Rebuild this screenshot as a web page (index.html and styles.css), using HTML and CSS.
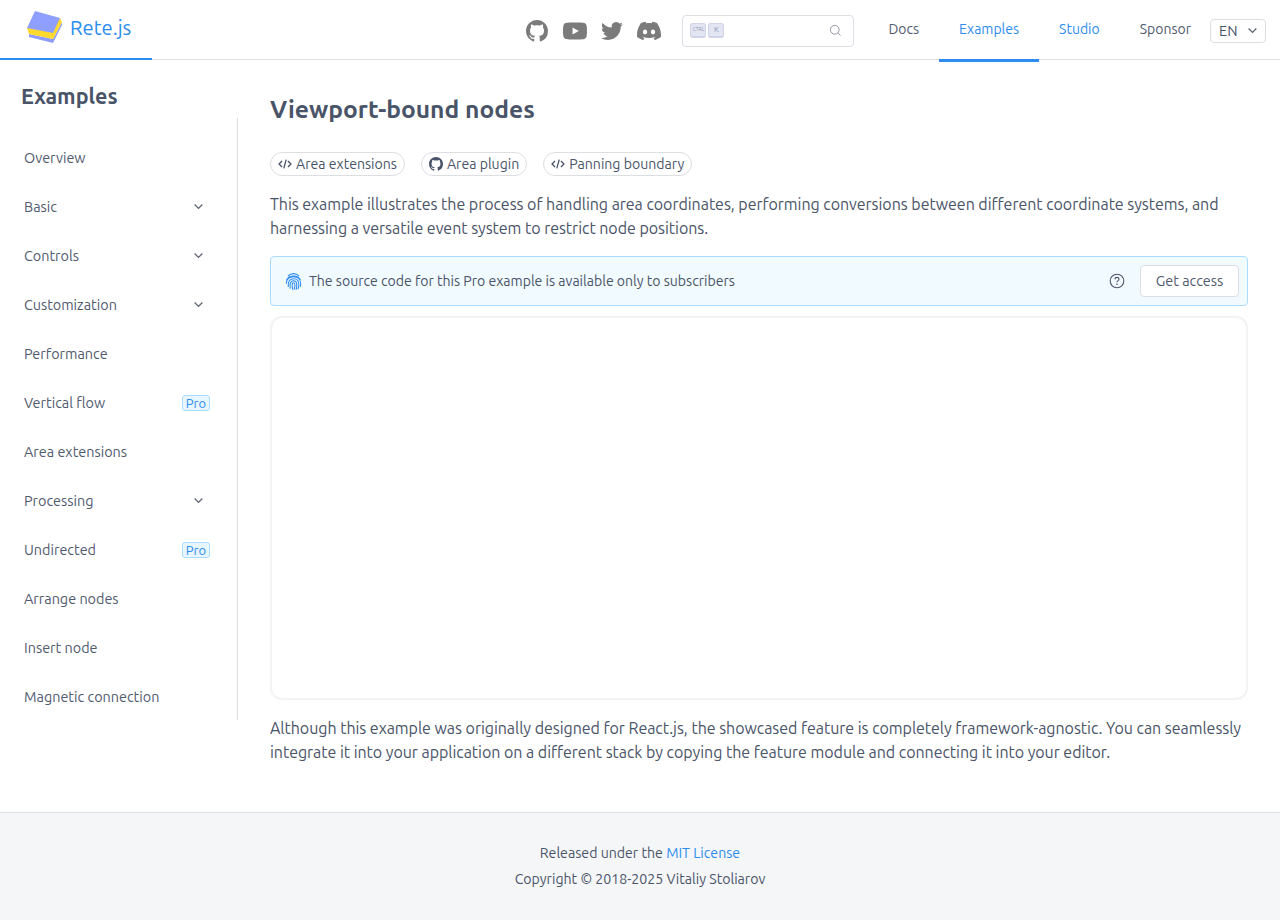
FILE: index.html
```html
<!DOCTYPE html>
<html lang="en">
<head>
    <meta charset="UTF-8">
    <meta name="viewport" content="width=device-width, initial-scale=1.0">
    <title>Viewport-bound nodes | Rete.js</title>
    <link rel="stylesheet" href="styles.css">
</head>
<body>
    <header class="topbar">
        <a class="brand">
            <svg class="brand-logo" viewBox="0 0 36 33">
                <polygon points="2,23 2,26 26,32 35,14 35,11 26,28" fill="#8f9cff"/>
                <polygon points="0,17 2,23 26,28 35,11 33,7" fill="#ffd92c"/>
                <polygon points="8,0 33,7 26,22 0,17" fill="#8f9fff"/>
            </svg>
            <span>Rete.js</span>
        </a>
        <div class="topbar-right">
            <div class="socials">
                <svg class="social social-small social-github" viewBox="0 0 16 16"><path d="M8 0C3.58 0 0 3.58 0 8c0 3.54 2.29 6.53 5.47 7.59.4.07.55-.17.55-.38 0-.19-.01-.82-.01-1.49-2.01.37-2.53-.49-2.69-.94-.09-.23-.48-.94-.82-1.13-.28-.15-.68-.52-.01-.53.63-.01 1.08.58 1.23.82.72 1.21 1.87.87 2.33.66.07-.52.28-.87.51-1.07-1.78-.2-3.64-.89-3.64-3.95 0-.87.31-1.59.82-2.15-.08-.2-.36-1.02.08-2.12 0 0 .67-.21 2.2.82.64-.18 1.32-.27 2-.27.68 0 1.36.09 2 .27 1.53-1.04 2.2-.82 2.2-.82.44 1.1.16 1.92.08 2.12.51.56.82 1.27.82 2.15 0 3.07-1.87 3.75-3.65 3.95.29.25.54.73.54 1.48 0 1.07-.01 1.93-.01 2.2 0 .21.15.46.55.38A8.013 8.013 0 0016 8c0-4.42-3.58-8-8-8z"/></svg>
                <svg class="social" viewBox="0 0 24 24"><path d="M23.498 6.186a3.016 3.016 0 0 0-2.122-2.136C19.505 3.545 12 3.545 12 3.545s-7.505 0-9.377.505A3.017 3.017 0 0 0 .502 6.186C0 8.07 0 12 0 12s0 3.93.502 5.814a3.016 3.016 0 0 0 2.122 2.136c1.871.505 9.376.505 9.376.505s7.505 0 9.377-.505a3.015 3.015 0 0 0 2.122-2.136C24 15.93 24 12 24 12s0-3.93-.502-5.814zM9.545 15.568V8.432L15.818 12l-6.273 3.568z"/></svg>
                <svg class="social social-small" viewBox="0 0 24 24"><path d="M23.953 4.57a10 10 0 01-2.825.775 4.958 4.958 0 002.163-2.723c-.951.555-2.005.959-3.127 1.184a4.92 4.92 0 00-8.384 4.482C7.69 8.095 4.067 6.13 1.64 3.162a4.822 4.822 0 00-.666 2.475c0 1.71.87 3.213 2.188 4.096a4.904 4.904 0 01-2.228-.616v.06a4.923 4.923 0 003.946 4.827 4.996 4.996 0 01-2.212.085 4.936 4.936 0 004.604 3.417 9.867 9.867 0 01-6.102 2.105c-.39 0-.779-.023-1.17-.067a13.995 13.995 0 007.557 2.209c9.053 0 13.998-7.496 13.998-13.985 0-.21 0-.42-.015-.63A9.935 9.935 0 0024 4.59z"/></svg>
                <svg class="social" viewBox="0 0 24 24"><path d="M20.317 4.3698a19.7913 19.7913 0 00-4.8851-1.5152.0741.0741 0 00-.0785.0371c-.211.3753-.4447.8648-.6083 1.2495-1.8447-.2762-3.68-.2762-5.4868 0-.1636-.3933-.4058-.8742-.6177-1.2495a.077.077 0 00-.0785-.037 19.7363 19.7363 0 00-4.8852 1.515.0699.0699 0 00-.0321.0277C.5334 9.0458-.319 13.5799.0992 18.0578a.0824.0824 0 00.0312.0561c2.0528 1.5076 4.0413 2.4228 5.9929 3.0294a.0777.0777 0 00.0842-.0276c.4616-.6304.8731-1.2952 1.226-1.9942a.076.076 0 00-.0416-.1057c-.6528-.2476-1.2743-.5495-1.8722-.8923a.077.077 0 01-.0076-.1277c.1258-.0943.2517-.1923.3718-.2914a.0743.0743 0 01.0776-.0105c3.9278 1.7933 8.18 1.7933 12.0614 0a.0739.0739 0 01.0785.0095c.1202.099.246.1981.3728.2924a.077.077 0 01-.0066.1276 12.2986 12.2986 0 01-1.873.8914.0766.0766 0 00-.0407.1067c.3604.698.7719 1.3628 1.225 1.9932a.076.076 0 00.0842.0286c1.961-.6067 3.9495-1.5219 6.0023-3.0294a.077.077 0 00.0313-.0552c.5004-5.177-.8382-9.6739-3.5485-13.6604a.061.061 0 00-.0312-.0286zM8.02 15.3312c-1.1825 0-2.1569-1.0857-2.1569-2.419 0-1.3332.9555-2.4189 2.157-2.4189 1.2108 0 2.1757 1.0952 2.1568 2.419 0 1.3332-.9555 2.4189-2.1569 2.4189zm7.9748 0c-1.1825 0-2.1569-1.0857-2.1569-2.419 0-1.3332.9554-2.4189 2.1569-2.4189 1.2108 0 2.1757 1.0952 2.1568 2.419 0 1.3332-.946 2.4189-2.1568 2.4189Z"/></svg>
            </div>
            <div class="search">
                <span class="key key-small">CTRL</span>
                <span class="key">K</span>
                <svg class="search-icon" viewBox="0 0 14 14"><circle cx="6.2" cy="6.2" r="4.7"/><path d="M9.6 9.6 12.4 12.4"/></svg>
            </div>
            <nav class="nav">
                <a class="nav-item">Docs</a>
                <a class="nav-item nav-active">Examples</a>
                <a class="nav-item nav-blue">Studio</a>
                <a class="nav-item">Sponsor</a>
            </nav>
            <div class="lang">EN <svg class="chevron" viewBox="0 0 10 10"><path d="M1.5 3.2 5 6.7 8.5 3.2"/></svg></div>
        </div>
    </header>

    <div class="layout">
        <aside class="sidebar">
            <h2 class="sidebar-title">Examples</h2>
            <ul class="menu">
                <li class="menu-item">Overview</li>
                <li class="menu-item">Basic <svg class="chevron" viewBox="0 0 10 10"><path d="M1.5 3.2 5 6.7 8.5 3.2"/></svg></li>
                <li class="menu-item">Controls <svg class="chevron" viewBox="0 0 10 10"><path d="M1.5 3.2 5 6.7 8.5 3.2"/></svg></li>
                <li class="menu-item">Customization <svg class="chevron" viewBox="0 0 10 10"><path d="M1.5 3.2 5 6.7 8.5 3.2"/></svg></li>
                <li class="menu-item">Performance</li>
                <li class="menu-item">Vertical flow <span class="pro">Pro</span></li>
                <li class="menu-item">Area extensions</li>
                <li class="menu-item">Processing <svg class="chevron" viewBox="0 0 10 10"><path d="M1.5 3.2 5 6.7 8.5 3.2"/></svg></li>
                <li class="menu-item">Undirected <span class="pro">Pro</span></li>
                <li class="menu-item">Arrange nodes</li>
                <li class="menu-item">Insert node</li>
                <li class="menu-item">Magnetic connection</li>
            </ul>
        </aside>

        <main class="content">
            <h1 class="page-title">Viewport-bound nodes</h1>
            <div class="chips">
                <a class="chip"><svg class="chip-icon" viewBox="0 0 16 16"><path class="code" d="M4.6 4.5 1.2 8l3.4 3.5M11.4 4.5 14.8 8l-3.4 3.5M9.4 3 6.6 13"/></svg>Area extensions</a>
                <a class="chip"><svg class="chip-icon" viewBox="0 0 16 16"><path d="M8 0C3.58 0 0 3.58 0 8c0 3.54 2.29 6.53 5.47 7.59.4.07.55-.17.55-.38 0-.19-.01-.82-.01-1.49-2.01.37-2.53-.49-2.69-.94-.09-.23-.48-.94-.82-1.13-.28-.15-.68-.52-.01-.53.63-.01 1.08.58 1.23.82.72 1.21 1.87.87 2.33.66.07-.52.28-.87.51-1.07-1.78-.2-3.64-.89-3.64-3.95 0-.87.31-1.59.82-2.15-.08-.2-.36-1.02.08-2.12 0 0 .67-.21 2.2.82.64-.18 1.32-.27 2-.27.68 0 1.36.09 2 .27 1.53-1.04 2.2-.82 2.2-.82.44 1.1.16 1.92.08 2.12.51.56.82 1.27.82 2.15 0 3.07-1.87 3.75-3.65 3.95.29.25.54.73.54 1.48 0 1.07-.01 1.93-.01 2.2 0 .21.15.46.55.38A8.013 8.013 0 0016 8c0-4.42-3.58-8-8-8z"/></svg>Area plugin</a>
                <a class="chip"><svg class="chip-icon" viewBox="0 0 16 16"><path class="code" d="M4.6 4.5 1.2 8l3.4 3.5M11.4 4.5 14.8 8l-3.4 3.5M9.4 3 6.6 13"/></svg>Panning boundary</a>
            </div>
            <p class="text">This example illustrates the process of handling area coordinates, performing conversions between different coordinate systems, and harnessing a versatile event system to restrict node positions.</p>
            <div class="alert">
                <svg class="fingerprint" viewBox="0 0 18 20">
                    <path d="M3 4.2C6.5 .8 11.5 .8 15 4.2M1.6 8.4C4.5 2.8 13.5 2.8 16.4 8.4M1.4 12.4C1.6 6.5 5.5 4.9 9 4.9s7.4 1.8 7.6 7.2c0 1.6 0 2.6-.5 3.6M3.4 15.8C2.9 10 5 7 9 7s5.9 2.5 5.6 6.6c-.1 1.8-.2 3-.9 4.3M5.6 17.6C4.9 13.5 5.2 9.2 9 9.2s3.6 3.6 3.4 6c-.1 1.3-.3 2.4-.8 3.6M8.4 18.8C7.4 16 6.9 11.4 9 11.4s1.4 4.400 .8 7"/>
                </svg>
                <span class="alert-text">The source code for this Pro example is available only to subscribers</span>
                <svg class="help" viewBox="0 0 16 16"><circle cx="8" cy="8" r="6.8"/><path d="M6 6.300C6 5 7 4.400 8 4.400s2 .7 2 1.800C10 7.700 8 7.600 8 9.300"/><circle class="dot" cx="8" cy="11.300" r=".8"/></svg>
                <button class="access">Get access</button>
            </div>
            <div class="canvas"></div>
            <p class="text">Although this example was originally designed for React.js, the showcased feature is completely framework-agnostic. You can seamlessly integrate it into your application on a different stack by copying the feature module and connecting it into your editor.</p>
        </main>
    </div>

    <footer class="footer">
        <p>Released under the <a>MIT License</a></p>
        <p>Copyright © 2018-2025 Vitaliy Stoliarov</p>
    </footer>
</body>
</html>
```

FILE: styles.css
```css
* {
    box-sizing: border-box;
}

body {
    margin: 0;
    font-family: Ubuntu, "Noto Sans", sans-serif;
    font-size: 14px;
    color: #4a5468;
    background: #fff;
}

/* header */
.topbar {
    display: flex;
    justify-content: space-between;
    height: 60px;
    border-bottom: 1px solid #dcdfe4;
}

.brand {
    display: flex;
    align-items: center;
    gap: 7px;
    width: 152px;
    height: 60px;
    padding: 0 0 4px 27px;
    border-bottom: 2px solid #2b8cf0;
    font-size: 20.2px;
    color: #2b8cf0;
}

.brand-logo {
    width: 36px;
    height: 33px;
}

.topbar-right {
    display: flex;
    align-items: flex-start;
}

.socials {
    display: flex;
    align-items: center;
    gap: 14px;
    height: 60px;
    padding-top: 1px;
}

.social {
    width: 24px;
    height: 24px;
    fill: #7b7b7b;
}

.social-small {
    width: 22px;
    height: 22px;
}

.social-github {
    margin-right: 1px;
}

.search {
    display: flex;
    align-items: center;
    gap: 2px;
    width: 172px;
    height: 32px;
    margin: 15px 14px 0 21px;
    padding: 0 11px 2px 7px;
    border: 1px solid #dcdfe6;
    border-radius: 4px;
}

.key {
    width: 16px;
    height: 15px;
    border: 1px solid #cfd3e4;
    border-bottom-width: 2px;
    border-radius: 3px;
    background: #e3e6f2;
    color: #8f98b5;
    font-size: 8px;
    line-height: 11px;
    text-align: center;
}

.key-small {
    font-size: 5px;
}

.search-icon {
    width: 13px;
    height: 13px;
    margin-left: auto;
    fill: none;
    stroke: #8a8f98;
    stroke-width: 1;
}

.nav {
    display: flex;
}

.nav-item {
    height: 62px;
    padding: 0 20px;
    font-size: 14px;
    line-height: 59px;
    color: #515a6e;
}

.nav-item:last-child {
    padding-right: 19px;
}

.nav-active {
    color: #2d8cf0;
    border-bottom: 3px solid #2d8cf0;
}

.nav-blue {
    color: #2d8cf0;
}

.lang {
    display: flex;
    align-items: center;
    justify-content: space-between;
    width: 56px;
    height: 24px;
    margin: 19px 14px 0 0;
    padding: 0 7px 2px 8px;
    border: 1px solid #dcdee2;
    border-radius: 4px;
    font-size: 14.5px;
}

.chevron {
    width: 11px;
    height: 11px;
    fill: none;
    stroke: #5f6673;
    stroke-width: 1.2;
}

/* page */
.layout {
    display: flex;
    height: 752px;
}

.sidebar {
    width: 238px;
    flex-shrink: 0;
}

.sidebar-title {
    margin: 21px 0 0 21px;
    height: 37px;
    font-size: 21.5px;
    line-height: 30px;
    font-weight: 700;
}

.menu {
    margin: 0;
    padding: 15px 0 0;
    height: 602px;
    overflow: hidden;
    list-style: none;
    border-right: 1px solid #dcdee2;
}

.menu-item {
    display: flex;
    align-items: center;
    justify-content: space-between;
    height: 49px;
    padding: 0 27px 0 24px;
    font-size: 14.4px;
    color: #515a6e;
}

.menu-item .chevron {
    margin-right: 6px;
}

.pro {
    width: 28px;
    height: 16px;
    border: 1px solid #a7dcfc;
    border-radius: 3px;
    background: #e8f6ff;
    color: #2d8cf0;
    font-size: 13px;
    line-height: 15px;
    text-align: center;
}

.content {
    flex: 1;
    padding: 0 32px;
    min-width: 0;
}

.page-title {
    margin: 33px 0 0;
    font-size: 24.6px;
    line-height: 32px;
    font-weight: 700;
}

.chips {
    display: flex;
    gap: 16px;
    margin-top: 27px;
}

.chip {
    display: flex;
    align-items: center;
    gap: 4px;
    height: 24px;
    padding: 0 7px 1px;
    border: 1px solid #dcdee2;
    border-radius: 12px;
    font-size: 14.1px;
}

.chip-icon {
    width: 14px;
    height: 14px;
    fill: #4a5468;
}

.code {
    fill: none;
    stroke: #4a5468;
    stroke-width: 1.5;
}

.text {
    margin: 16px 0;
    font-size: 16px;
    letter-spacing: -0.04px;
    line-height: 24px;
}

.alert {
    display: flex;
    align-items: center;
    height: 50px;
    padding: 0 8px 0 14px;
    border: 1px solid #abdcff;
    border-radius: 4px;
    background: #f0faff;
}

.fingerprint {
    width: 17px;
    height: 19px;
    flex-shrink: 0;
    fill: none;
    stroke: #2d8cf0;
    stroke-width: 1.1;
}

.alert-text {
    flex: 1;
    margin-left: 7px;
    font-size: 14.07px;
}

.help {
    width: 16px;
    height: 16px;
    margin-right: 15px;
    fill: none;
    stroke: #4a5468;
    stroke-width: 1.1;
}

.help .dot {
    fill: #4a5468;
    stroke: none;
}

.access {
    width: 99px;
    height: 32px;
    padding: 0;
    border: 1px solid #dcdee2;
    border-radius: 4px;
    background: #fff;
    color: #515a6e;
    font-family: inherit;
    font-size: 14.4px;
}

.canvas {
    height: 384px;
    margin-top: 10px;
    border: 2px solid #f2f3f5;
    border-radius: 12px;
}

.footer {
    height: 108px;
    padding-top: 27px;
    border-top: 1px solid #dcdfe4;
    background: #f5f6f8;
    font-size: 14.15px;
    line-height: 26px;
    text-align: center;
}

.footer p {
    margin: 0;
}

.footer a {
    color: #2d8cf0;
}
```
